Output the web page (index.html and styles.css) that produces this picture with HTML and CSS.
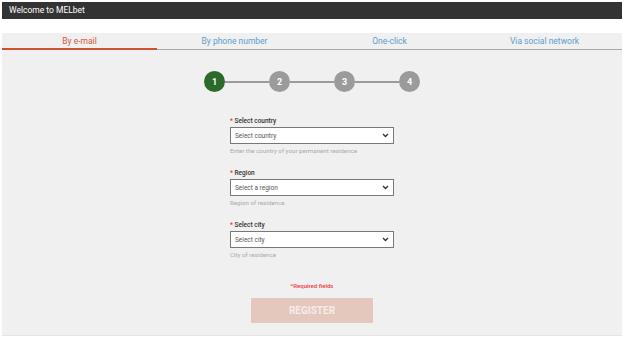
FILE: index.html
```html
<!DOCTYPE html>
<html lang="en">
<head>
    <meta charset="UTF-8">
    <meta name="viewport" content="width=device-width, initial-scale=1.0">
    <title>Welcome to MELbet</title>
    <link rel="stylesheet" href="styles.css">
</head>
<body>
    <div class="top-bar">Welcome to MELbet</div>

    <div class="reg-panel">
        <div class="reg-tabs">
            <div class="reg-tab active">By e-mail</div>
            <div class="reg-tab">By phone number</div>
            <div class="reg-tab">One-click</div>
            <div class="reg-tab">Via social network</div>
        </div>

        <div class="steps">
            <div class="step active">1</div>
            <div class="step-line"></div>
            <div class="step">2</div>
            <div class="step-line"></div>
            <div class="step">3</div>
            <div class="step-line"></div>
            <div class="step">4</div>
        </div>

        <form class="reg-form">
            <div class="field">
                <label class="field-label"><span class="req">*</span> Select country</label>
                <div class="select-box">
                    <span>Select country</span>
                    <svg class="chevron" width="7" height="5" viewBox="0 0 7 5"><path d="M1 1 L3.5 3.5 L6 1" fill="none" stroke="#333" stroke-width="1.4"/></svg>
                </div>
                <div class="field-hint">Enter the country of your permanent residence</div>
            </div>

            <div class="field">
                <label class="field-label"><span class="req">*</span> Region</label>
                <div class="select-box">
                    <span>Select a region</span>
                    <svg class="chevron" width="7" height="5" viewBox="0 0 7 5"><path d="M1 1 L3.5 3.5 L6 1" fill="none" stroke="#333" stroke-width="1.4"/></svg>
                </div>
                <div class="field-hint">Region of residence</div>
            </div>

            <div class="field">
                <label class="field-label"><span class="req">*</span> Select city</label>
                <div class="select-box">
                    <span>Select city</span>
                    <svg class="chevron" width="7" height="5" viewBox="0 0 7 5"><path d="M1 1 L3.5 3.5 L6 1" fill="none" stroke="#333" stroke-width="1.4"/></svg>
                </div>
                <div class="field-hint">City of residence</div>
            </div>

            <div class="required-note">*Required fields</div>
            <button type="button" class="register-button">REGISTER</button>
        </form>
    </div>
</body>
</html>
```

FILE: styles.css
```css
* {
    margin: 0;
    padding: 0;
    box-sizing: border-box;
}

body {
    font-family: Roboto, 'Liberation Sans', sans-serif;
    background: white;
    margin: 2px 2px 0 2px;
    color: #333;
}

.top-bar {
    background: #333;
    color: white;
    height: 17px;
    line-height: 17px;
    font-size: 8.5px;
    padding-left: 7px;
}

.reg-panel {
    margin-top: 14px;
    background: #eff0ef;
    height: 303px;
    border-bottom: 1px solid #e4e6e5;
}

.reg-tabs {
    display: flex;
    border-bottom: 1px solid #aaa;
}

.reg-tab {
    flex: 1;
    text-align: center;
    font-size: 8.5px;
    color: #5a9fd0;
    height: 16px;
    line-height: 16px;
}

.reg-tab.active {
    color: #d4583a;
    border-bottom: 2px solid #d0502f;
    margin-bottom: -1px;
    height: 17px;
}

.steps {
    display: flex;
    align-items: center;
    justify-content: center;
    margin-top: 21px;
}

.step {
    width: 21px;
    height: 21px;
    border-radius: 50%;
    background: #9b9b9b;
    color: white;
    font-size: 9px;
    font-weight: 700;
    display: flex;
    align-items: center;
    justify-content: center;
}

.step.active {
    background: #2b6a2b;
}

.step-line {
    width: 44px;
    height: 2px;
    background: #9b9b9b;
}

.reg-form {
    width: 164px;
    margin: 25px auto 0;
    display: flex;
    flex-direction: column;
}

.field {
    margin-bottom: 13px;
}

.field-label {
    display: block;
    font-size: 6.5px;
    font-weight: 500;
    line-height: 9px;
    margin-bottom: 1px;
    color: #333;
}

.req {
    color: #e33;
}

.select-box {
    height: 17px;
    background: white;
    border: 1px solid #777;
    display: flex;
    align-items: center;
    justify-content: space-between;
    padding: 0 4px;
    font-size: 6.5px;
    color: #555;
}

.field-hint {
    margin-top: 3px;
    font-size: 6.2px;
    line-height: 9px;
    color: #aaa;
}

.required-note {
    margin-top: 8px;
    text-align: center;
    font-size: 6px;
    line-height: 9px;
    font-weight: 500;
    color: #ec3b3b;
}

.register-button {
    margin: 8px auto 0;
    width: 122px;
    height: 25px;
    border: none;
    background: #e4c8bd;
    color: #f6ece8;
    font-family: Roboto, 'Liberation Sans', sans-serif;
    font-size: 10px;
    font-weight: 700;
}
```
